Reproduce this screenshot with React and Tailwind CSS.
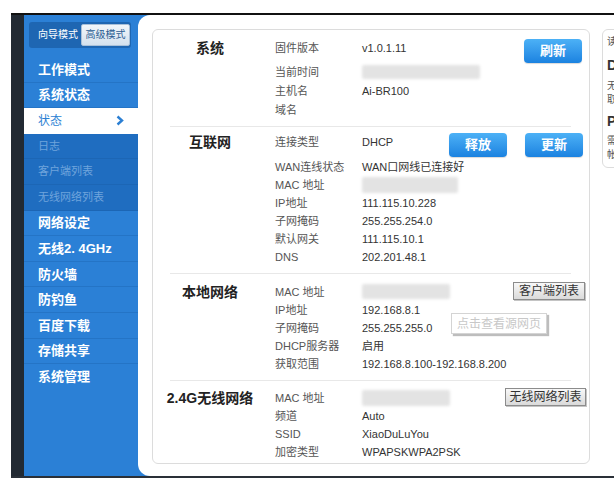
import React from "react";

function MenuItem({ children }) {
  return (
    <div className="h-[25.6px] flex items-center pl-[14px] text-[13px] font-bold text-white border-b border-[#2474c6] leading-none">
      {children}
    </div>
  );
}

function SubItem({ children }) {
  return (
    <div className="h-[25.6px] flex items-center pl-[14px] text-[11px] text-[#6fa4dc] bg-[#1f6dc0] border-b border-[#1c66b5] leading-none">
      {children}
    </div>
  );
}

function Row({ label, children, right, h = "h-[18px]" }) {
  return (
    <div className={`flex items-start ${h}`}>
      <div className="w-[87px] text-[11px] leading-[18px] text-[#555] shrink-0 whitespace-nowrap">{label}</div>
      <div className="flex-1 text-[11px] leading-[18px] text-[#333] relative whitespace-nowrap">{children}</div>
      {right}
    </div>
  );
}

function BlueBtn({ children, className = "" }) {
  return (
    <div
      className={`w-[58px] h-[24px] rounded-[4px] bg-gradient-to-b from-[#4cb1f6] to-[#1a82e0] text-white text-[13px] font-bold flex items-center justify-center shadow-[0_1px_1px_rgba(0,0,0,0.15)] ${className}`}
    >
      {children}
    </div>
  );
}

function GrayBtn({ children, className = "" }) {
  return (
    <div
      className={`h-[18px] bg-gradient-to-b from-[#f8f8f8] to-[#dadada] border border-[#8c8c8c] text-[12px] text-[#333] flex items-center justify-center shadow-[1px_1px_0_#c4c4c4] leading-none whitespace-nowrap ${className}`}
    >
      {children}
    </div>
  );
}

function Blur({ className }) {
  return <div className={`rounded-[2px] bg-[#e3e3e3] blur-[1.5px] ${className}`} />;
}

function Sep() {
  return <div className="h-px bg-[#e8e8e8] mr-[11px]" />;
}

function Section({ title, pt, pb, children }) {
  return (
    <div className={`flex ${pt} ${pb}`}>
      <div className="w-[80px] shrink-0 flex justify-center">
        <span className="text-[14px] font-bold text-[#222] leading-[18px] whitespace-nowrap">{title}</span>
      </div>
      <div className="ml-[25px] flex-1 flex flex-col">{children}</div>
    </div>
  );
}

export default function App() {
  return (
    <div className="relative w-[614px] h-[488px] bg-white overflow-hidden font-['Liberation_Sans','Noto_Sans_CJK_SC',sans-serif]">
      <div className="h-[13px]" />
      <div className="ml-[11px] h-[465px] border-t-2 border-b-2 border-t-[#111] border-b-[#2a3038] flex">
        <div className="w-[13px] bg-[#222a33] shrink-0" />
        <div className="flex-1 bg-[#2b80d6] flex">
          {/* Sidebar */}
          <div className="w-[114px] shrink-0 flex flex-col">
            <div className="mt-[7px] ml-[5px] w-[102px] h-[26px] rounded-[3px] bg-[#1e66b2] flex items-center">
              <span className="pl-[9px] text-[10px] text-white leading-none">向导模式</span>
              <div className="ml-auto mr-[1px] w-[49px] h-[22px] rounded-[2px] bg-gradient-to-b from-[#f2f6fa] to-[#d4e1ee] border border-[#a9c0d8] text-[10px] text-[#2b5d92] flex items-center justify-center leading-none">
                高级模式
              </div>
            </div>
            <div className="mt-[9px] flex flex-col">
              <MenuItem>工作模式</MenuItem>
              <MenuItem>系统状态</MenuItem>
              <div className="h-[25.6px] flex items-center pl-[14px] pr-[14px] bg-white text-[12px] text-[#2b7fd3] leading-none">
                <span>状态</span>
                <svg className="ml-auto" width="8" height="11" viewBox="0 0 8 11">
                  <path d="M1.5 1.5 L6 5.5 L1.5 9.5" fill="none" stroke="#2b7fd3" strokeWidth="2.4" />
                </svg>
              </div>
              <SubItem>日志</SubItem>
              <SubItem>客户端列表</SubItem>
              <SubItem>无线网络列表</SubItem>
              <MenuItem>网络设定</MenuItem>
              <MenuItem>无线2. 4GHz</MenuItem>
              <MenuItem>防火墙</MenuItem>
              <MenuItem>防钓鱼</MenuItem>
              <MenuItem>百度下载</MenuItem>
              <MenuItem>存储共享</MenuItem>
              <div className="h-[25.6px] flex items-center pl-[14px] text-[13px] font-bold text-white leading-none">系统管理</div>
            </div>
          </div>

          {/* Main */}
          <div className="flex-1 bg-white rounded-l-[12px] pt-[14px] pl-[14px] flex items-start gap-[12px] overflow-hidden">
            <div className="w-[438px] h-[435px] shrink-0 border border-[#dcdcdc] rounded-[6px] pl-[17px] pr-[7px] flex flex-col">
              <Section title="系统" pt="pt-[9px]" pb="pb-[6px]">
                <Row label="固件版本" h="h-[24px]" right={<BlueBtn>刷新</BlueBtn>}>v1.0.1.11</Row>
                <Row label="当前时间" h="h-[19px]">
                  <Blur className="absolute left-0 top-[2px] w-[118px] h-[14px]" />
                </Row>
                <Row label="主机名" h="h-[19px]">Ai-BR100</Row>
                <Row label="域名" h="h-[19px]" />
              </Section>
              <Sep />
              <Section title="互联网" pt="pt-[6px]" pb="pb-[7px]">
                <Row
                  label="连接类型"
                  h="h-[25px]"
                  right={
                    <div className="flex gap-[18px] mr-[-1px]">
                      <BlueBtn>释放</BlueBtn>
                      <BlueBtn>更新</BlueBtn>
                    </div>
                  }
                >
                  DHCP
                </Row>
                <Row label="WAN连线状态">WAN口网线已连接好</Row>
                <Row label="MAC 地址">
                  <Blur className="absolute left-0 top-[1px] w-[96px] h-[16px]" />
                </Row>
                <Row label="IP地址">111.115.10.228</Row>
                <Row label="子网掩码">255.255.254.0</Row>
                <Row label="默认网关">111.115.10.1</Row>
                <Row label="DNS">202.201.48.1</Row>
              </Section>
              <Sep />
              <Section title="本地网络" pt="pt-[9px]" pb="pb-[7px]">
                <Row label="MAC 地址" right={<GrayBtn className="w-[72px] mr-[-3px] mt-[-1px]">客户端列表</GrayBtn>}>
                  <Blur className="absolute left-0 top-[1px] w-[88px] h-[15px]" />
                </Row>
                <Row label="IP地址">192.168.8.1</Row>
                <Row label="子网掩码">255.255.255.0</Row>
                <Row label="DHCP服务器">启用</Row>
                <Row label="获取范围">192.168.8.100-192.168.8.200</Row>
              </Section>
              <Sep />
              <Section title="2.4G无线网络" pt="pt-[8px]" pb="pb-0">
                <Row label="MAC 地址" right={<GrayBtn className="w-[81px] mr-[-4px] mt-[-1px]">无线网络列表</GrayBtn>}>
                  <Blur className="absolute left-0 top-[1px] w-[88px] h-[16px]" />
                </Row>
                <Row label="频道">Auto</Row>
                <Row label="SSID">XiaoDuLuYou</Row>
                <Row label="加密类型">WPAPSKWPA2PSK</Row>
              </Section>
            </div>

            <div className="w-[60px] h-[139px] shrink-0 border border-[#dcdcdc] rounded-[6px] pl-[4px] pt-[6px] flex flex-col text-[#555] whitespace-nowrap">
              <div className="text-[10px] leading-[12px]">读取信息</div>
              <div className="mt-[9px] text-[14px] font-bold text-[#333] leading-[16px]">DHCP</div>
              <div className="mt-[6px] text-[10px] leading-[14px]">无需设置</div>
              <div className="text-[10px] leading-[14px]">取得地址</div>
              <div className="mt-[6px] text-[14px] font-bold text-[#333] leading-[16px]">PPPoE</div>
              <div className="mt-[5px] text-[10px] leading-[14px]">需要输入</div>
              <div className="text-[10px] leading-[14px]">帐号密码</div>
            </div>
          </div>
        </div>
      </div>

      {/* tooltip */}
      <div className="absolute left-[451px] top-[313px] w-[96px] h-[21px] bg-white border border-[#d4d4d4] shadow-[2px_2px_1px_#bdbdbd] text-[12px] text-[#c8c8c8] flex items-center justify-center leading-none">
        点击查看源网页
      </div>
    </div>
  );
}
